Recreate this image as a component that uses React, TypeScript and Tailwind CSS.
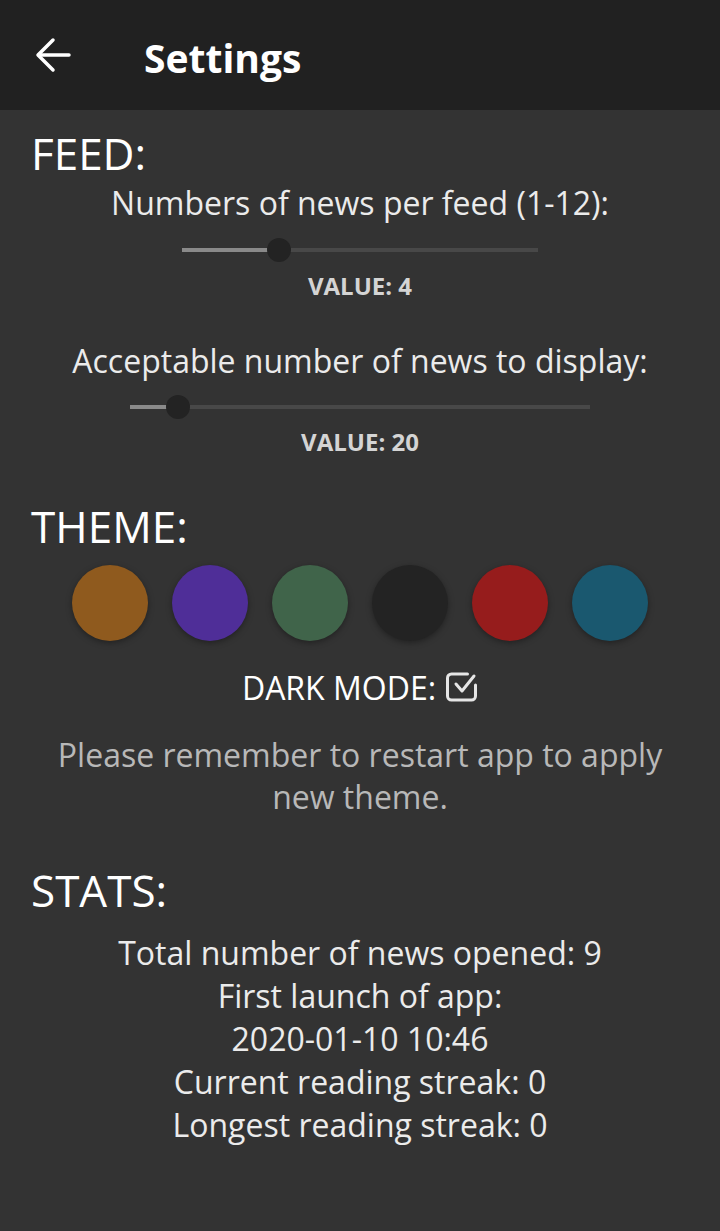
import React from 'react';

const themes = ['#8f5a1e', '#4f2e98', '#40644a', '#232323', '#961c1c', '#1a586f'];

const stats = [
    'Total number of news opened: 9',
    'First launch of app:',
    '2020-01-10 10:46',
    'Current reading streak: 0',
    'Longest reading streak: 0',
];

function Slider({ width, filled }: { width: number; filled: number }) {
    return (
        <div className="flex items-center h-6" style={{ width }}>
            <div className="h-1 bg-[#8a8a8a]" style={{ width: filled }}></div>
            <div className="w-6 h-6 -mx-3 rounded-full bg-[#232323] shrink-0 z-10"></div>
            <div className="h-1 flex-1 bg-[#484848]"></div>
        </div>
    );
}

export default function App() {
    return (
        <div className="w-[720px] h-[1231px] bg-[#333333] text-white" style={{ fontFamily: '"Open Sans", sans-serif' }}>
            <div className="h-[110px] bg-[#212121] flex items-center">
                <svg width="48" height="48" viewBox="0 0 48 48" className="ml-[30px]" fill="none" stroke="white" strokeWidth="3.5" strokeLinecap="round" strokeLinejoin="round">
                    <path d="M39 24H9" />
                    <path d="M23 9L8 24l15 15" />
                </svg>
                <span className="ml-[66px] text-[39px] font-bold leading-none mt-[4px]">Settings</span>
            </div>

            <div className="flex flex-col pt-[19px]">
                <h2 className="px-[31px] text-[44px] leading-[48px]">FEED:</h2>
                <p className="mt-[6px] text-center text-[32px] leading-[40px] text-[#ebebeb]">Numbers of news per feed (1-12):</p>
                <div className="mt-[15px] flex justify-center">
                    <Slider width={356} filled={97} />
                </div>
                <p className="mt-[10px] text-center text-[24px] leading-[28px] font-bold text-[#d4d4d4]">VALUE: 4</p>

                <p className="mt-[41px] text-center text-[32px] leading-[40px] text-[#ebebeb]">Acceptable number of news to display:</p>
                <div className="mt-[14px] flex justify-center">
                    <Slider width={460} filled={48} />
                </div>
                <p className="mt-[9px] text-center text-[24px] leading-[28px] font-bold text-[#d4d4d4]">VALUE: 20</p>

                <h2 className="mt-[46px] px-[31px] text-[44px] leading-[48px]">THEME:</h2>
                <div className="mt-[15px] flex justify-center gap-6">
                    {themes.map((c) => (
                        <div key={c} className="w-[76px] h-[76px] rounded-full shadow-[0_2px_6px_rgba(0,0,0,0.35)]" style={{ backgroundColor: c }}></div>
                    ))}
                </div>
                <div className="mt-[27px] flex items-center justify-center gap-[10px] h-[40px]">
                    <span className="text-[32px] leading-[40px]">DARK MODE:</span>
                    <svg width="32" height="32" viewBox="0 0 32 32" fill="none" stroke="#e6e6e6" strokeWidth="3" strokeLinecap="round" strokeLinejoin="round" className="mt-[-2px]">
                        <path d="M29.5 14v11a4 4 0 0 1-4 4h-20a4 4 0 0 1-4-4V7a4 4 0 0 1 4-4h16" />
                        <path d="M10 13l6 7 12-15" />
                    </svg>
                </div>
                <p className="mt-[26px] px-[40px] text-center text-[32px] leading-[42px] text-[#b8b8b8]">
                    Please remember to restart app to apply new theme.
                </p>

                <h2 className="mt-[48px] px-[31px] text-[44px] leading-[48px]">STATS:</h2>
                <div className="mt-[17px] flex flex-col items-center text-[32px] leading-[43px] text-[#ebebeb]">
                    {stats.map((s) => (
                        <span key={s}>{s}</span>
                    ))}
                </div>
            </div>
        </div>
    );
}
